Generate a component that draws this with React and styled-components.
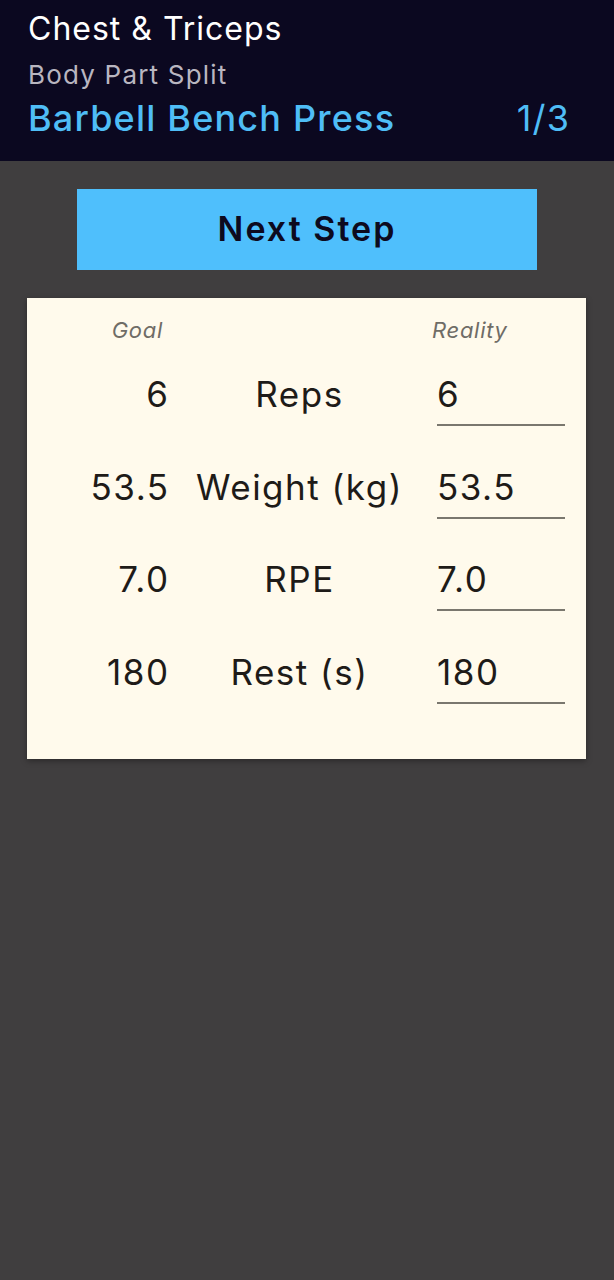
import React from "react";
import styled, { createGlobalStyle } from "styled-components";

const Global = createGlobalStyle`
  html, body { margin: 0; padding: 0; background: #403e3f; }
  body { font-family: Inter, "Noto Sans", sans-serif; }
  #root { min-height: 1280px; background: #403e3f; }
`;

const Page = styled.div`
  display: flex;
  flex-direction: column;
  min-height: 1280px;
  background: #403e3f;
`;

const Header = styled.header`
  background: #0b0820;
  height: 161px;
  box-sizing: border-box;
  padding: 10px 45px 0 28px;
  display: flex;
  flex-direction: column;
`;

const Title = styled.div`
  color: #ffffff;
  font-size: 32px;
  line-height: 38px;
  letter-spacing: 1px;
`;

const Subtitle = styled.div`
  color: #b9b6c0;
  font-size: 26px;
  line-height: 32px;
  letter-spacing: 1.2px;
  margin-top: 11px;
`;

const ExerciseRow = styled.div`
  display: flex;
  justify-content: space-between;
  align-items: baseline;
  color: #4fbdf6;
  font-size: 36px;
  line-height: 44px;
  font-weight: 500;
  letter-spacing: 1.2px;
  margin-top: 5px;
`;

const Counter = styled.span`
  font-weight: 400;
  margin-right: -1.2px;
`;

const Main = styled.main`
  display: flex;
  flex-direction: column;
  align-items: center;
  padding-top: 28px;
`;

const NextButton = styled.button`
  width: 460px;
  height: 81px;
  border: none;
  padding: 0 0 3px;
  background: #4fbffc;
  color: #0d0a1e;
  font-family: Inter, "Noto Sans", sans-serif;
  font-size: 34px;
  font-weight: 600;
  letter-spacing: 2px;
  cursor: pointer;
`;

const Card = styled.section`
  align-self: stretch;
  margin: 28px 28px 0 27px;
  height: 461px;
  box-sizing: border-box;
  background: #fffaec;
  box-shadow: 0 2px 6px rgba(0, 0, 0, 0.35);
  padding: 18px 21px 0 20px;
  display: grid;
  grid-template-columns: 121px 263px 134px;
  grid-template-rows: 28px;
  grid-auto-rows: 92.5px;
  align-content: start;
`;

const ColHead = styled.div`
  font-style: italic;
  font-size: 22px;
  color: #6f6c66;
  line-height: 28px;
  letter-spacing: 0.7px;
  text-align: ${(p) => p.$align || "left"};
  padding-right: ${(p) => p.$pr || 0}px;
  padding-left: ${(p) => p.$pl || 0}px;
`;

const Cell = styled.div`
  font-size: 35px;
  line-height: 40px;
  letter-spacing: 1.5px;
  color: #1e1b18;
  padding-top: 30.3px;
`;

const Goal = styled(Cell)`
  text-align: right;
  margin-right: -1.5px;
`;

const Label = styled(Cell)`
  text-align: center;
`;

const Reality = styled.div`
  padding-top: 30.3px;
  padding-left: 6px;
  display: flex;
`;

const Input = styled.input`
  width: 128px;
  height: 40px;
  box-sizing: content-box;
  border: none;
  border-bottom: 2px solid #7a776e;
  background: transparent;
  font-family: Inter, "Noto Sans", sans-serif;
  font-size: 35px;
  letter-spacing: 1.5px;
  line-height: 40px;
  color: #1e1b18;
  padding: 0 0 10px 0;
  margin: 0;
  outline: none;
`;

const rows = [
  { goal: "6", label: "Reps", value: "6" },
  { goal: "53.5", label: "Weight (kg)", value: "53.5" },
  { goal: "7.0", label: "RPE", value: "7.0" },
  { goal: "180", label: "Rest (s)", value: "180" },
];

export default function App() {
  return (
    <Page>
      <Global />
      <Header>
        <Title>Chest &amp; Triceps</Title>
        <Subtitle>Body Part Split</Subtitle>
        <ExerciseRow>
          <span>Barbell Bench Press</span>
          <Counter>1/3</Counter>
        </ExerciseRow>
      </Header>
      <Main>
        <NextButton>Next Step</NextButton>
        <Card>
          <ColHead $align="right" $pr={5}>Goal</ColHead>
          <div />
          <ColHead $pl={1}>Reality</ColHead>
          {rows.map((r) => (
            <React.Fragment key={r.label}>
              <Goal>{r.goal}</Goal>
              <Label>{r.label}</Label>
              <Reality>
                <Input defaultValue={r.value} />
              </Reality>
            </React.Fragment>
          ))}
        </Card>
      </Main>
    </Page>
  );
}
